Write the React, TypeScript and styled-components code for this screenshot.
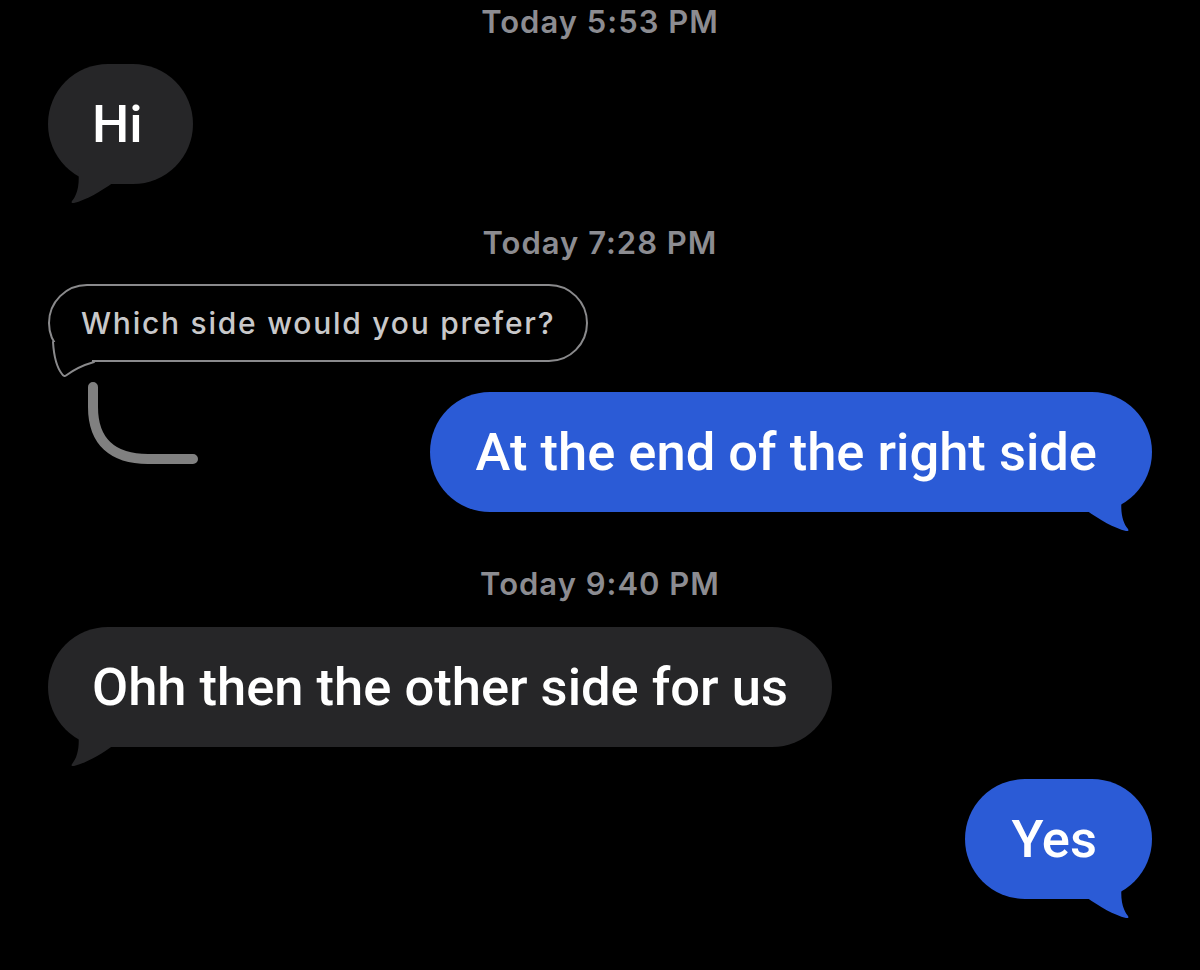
import React from "react";
import styled, { createGlobalStyle } from "styled-components";

const GlobalStyle = createGlobalStyle`
  html, body {
    margin: 0;
    padding: 0;
    background: #000;
  }
  body {
    font-family: Inter, "Noto Sans", sans-serif;
    -webkit-font-smoothing: antialiased;
  }
`;

const GRAY = "#262628";
const BLUE = "#2b5bd6";

const Thread = styled.div`
  width: 1200px;
  height: 970px;
  box-sizing: border-box;
  padding: 0 48px;
  display: flex;
  flex-direction: column;
  background: #000;
  overflow: hidden;
`;

const Timestamp = styled.div<{ $mt: number }>`
  margin-top: ${(p) => p.$mt}px;
  height: 36px;
  line-height: 36px;
  text-align: center;
  font-family: Inter, sans-serif;
  font-size: 31px;
  font-weight: 600;
  color: #8c8c91;
  letter-spacing: 1px;
`;

const Row = styled.div<{ $mt: number; $align: "start" | "end" | "between" }>`
  margin-top: ${(p) => p.$mt}px;
  display: flex;
  align-items: flex-start;
  justify-content: ${(p) =>
    p.$align === "start"
      ? "flex-start"
      : p.$align === "end"
      ? "flex-end"
      : "space-between"};
`;

const Bubble = styled.div<{ $blue?: boolean; $mt?: number; $minW?: number }>`
  position: relative;
  box-sizing: border-box;
  margin-top: ${(p) => p.$mt ?? 0}px;
  min-width: ${(p) => p.$minW ?? 0}px;
  height: 120px;
  line-height: 120px;
  padding: 0 ${(p) => (p.$blue ? 55 : 44)}px 0 ${(p) => (p.$blue ? 46 : 44)}px;
  border-radius: 60px;
  background: ${(p) => (p.$blue ? BLUE : GRAY)};
  color: #fff;
  font-family: Roboto, Inter, sans-serif;
  font-size: 52.5px;
  font-weight: 500;
  letter-spacing: 0px;
  white-space: nowrap;
`;

const BubbleText = styled.span`
  position: relative;
  z-index: 1;
`;

const TailSvg = styled.svg<{ $right?: boolean }>`
  position: absolute;
  bottom: -20px;
  ${(p) => (p.$right ? "right: 20px; transform: scaleX(-1);" : "left: 20px;")}
  width: 50px;
  height: 36px;
  overflow: visible;
`;

const Tail = ({ color, right }: { color: string; right?: boolean }) => (
  <TailSvg $right={right} viewBox="0 0 50 36">
    <path
      d="M10 0 C12 14 10 26 4 33 Q2.5 35.5 6 35 C18 32 32 24 46 14 L46 0 Z"
      fill={color}
    />
  </TailSvg>
);

const OutlineBubble = styled.div`
  position: relative;
  height: 74px;
  line-height: 74px;
  padding: 0 31px;
  border: 2px solid #8a8a8c;
  border-radius: 40px;
  color: #c8c8ca;
  font-family: Inter, Roboto, sans-serif;
  font-size: 30px;
  font-weight: 500;
  letter-spacing: 1.75px;
  white-space: nowrap;
`;

const OutlineTailSvg = styled.svg`
  position: absolute;
  left: -2px;
  top: calc(100% - 18px);
  width: 50px;
  height: 36px;
  overflow: visible;
`;

const OutlineTail = () => (
  <OutlineTailSvg viewBox="0 0 50 36">
    <path d="M5 0 C6 16 10 28 16 34 C22 30 32 24 44 20 L44 0 Z" fill="#000" />
    <path
      d="M5 0 C6 16 10 27 14 32 Q16 35 18 33.5 C24 29 32 24 46 20"
      fill="none"
      stroke="#8a8a8c"
      strokeWidth="2"
      strokeLinecap="round"
      strokeLinejoin="round"
    />
  </OutlineTailSvg>
);

const ReplyLine = styled.svg`
  display: block;
  margin-left: 40px;
  width: 110px;
  height: 85px;
  flex: none;
`;

export default function App() {
  return (
    <>
      <GlobalStyle />
      <Thread>
        <Timestamp $mt={4}>Today 5:53 PM</Timestamp>
        <Row $mt={24} $align="start">
          <Bubble $minW={145}>
            <BubbleText>Hi</BubbleText>
            <Tail color={GRAY} />
          </Bubble>
        </Row>
        <Timestamp $mt={41}>Today 7:28 PM</Timestamp>
        <Row $mt={23} $align="start">
          <OutlineBubble>
            Which side would you prefer?
            <OutlineTail />
          </OutlineBubble>
        </Row>
        <Row $mt={20} $align="between">
          <ReplyLine viewBox="0 0 110 85">
            <path
              d="M5 5 L5 25 C5 60 25 77 60 77 L105 77"
              fill="none"
              stroke="#808080"
              strokeWidth="10"
              strokeLinecap="round"
            />
          </ReplyLine>
          <Bubble $blue $mt={10}>
            <BubbleText>At the end of the right side</BubbleText>
            <Tail color={BLUE} right />
          </Bubble>
        </Row>
        <Timestamp $mt={54}>Today 9:40 PM</Timestamp>
        <Row $mt={25} $align="start">
          <Bubble>
            <BubbleText>Ohh then the other side for us</BubbleText>
            <Tail color={GRAY} />
          </Bubble>
        </Row>
        <Row $mt={32} $align="end">
          <Bubble $blue>
            <BubbleText>Yes</BubbleText>
            <Tail color={BLUE} right />
          </Bubble>
        </Row>
      </Thread>
    </>
  );
}
